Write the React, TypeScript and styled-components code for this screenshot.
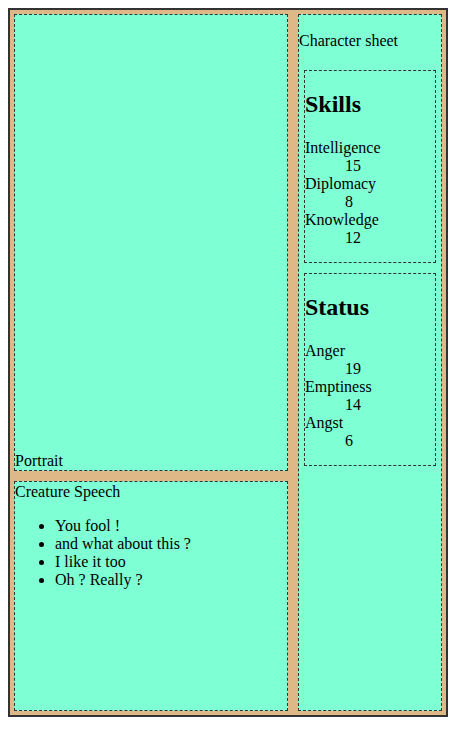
import React from "react";
import styled, { createGlobalStyle } from "styled-components";

const GlobalStyle = createGlobalStyle`
  body {
    margin: 8px;
    font-family: "Liberation Serif", "Times New Roman", serif;
    font-size: 16px;
    color: #000;
    background: #fff;
  }
`;

const Board = styled.div`
  display: grid;
  grid-template-columns: 274px 144px;
  grid-template-rows: 457px 230px;
  gap: 10px;
  width: 428px;
  padding: 4px;
  background-color: burlywood;
  border: 2px solid #333;
`;

const Panel = styled.div<{ $span?: boolean }>`
  box-sizing: border-box;
  display: flex;
  flex-direction: column;
  background-color: aquamarine;
  border: 1px dashed #333;
  grid-row: ${(p) => (p.$span ? "1 / 3" : "auto")};
  grid-column: ${(p) => (p.$span ? "2" : "auto")};
  min-height: 0;
`;

const PortraitPanel = styled(Panel)`
  justify-content: flex-end;
`;

const SpeechPanel = styled(Panel)`
  display: block;
  padding-top: 1px;
`;

const SpeechList = styled.ul`
  margin: 16px 0;
  padding-left: 40px;
`;

const SheetTitle = styled.p`
  margin: 16px 0;
  padding-top: 1px;
  line-height: 17px;
`;

const StatBox = styled.div`
  margin: 5px;
  border: 1px dashed #333;
`;

const StatHeading = styled.h2`
  margin: 0.83em 0;
  font-size: 24px;
  font-weight: bold;
`;

const StatList = styled.dl`
  margin: 16px 0 15px;
  padding-top: 1px;
`;

const StatValue = styled.dd`
  margin-left: 40px;
`;

type Stat = { name: string; value: number };

const skills: Stat[] = [
  { name: "Intelligence", value: 15 },
  { name: "Diplomacy", value: 8 },
  { name: "Knowledge", value: 12 },
];

const status: Stat[] = [
  { name: "Anger", value: 19 },
  { name: "Emptiness", value: 14 },
  { name: "Angst", value: 6 },
];

const speech = ["You fool !", "and what about this ?", "I like it too", "Oh ? Really ?"];

const StatBlock = ({ title, stats }: { title: string; stats: Stat[] }) => (
  <StatBox>
    <StatHeading>{title}</StatHeading>
    <StatList>
      {stats.map((s) => (
        <React.Fragment key={s.name}>
          <dt>{s.name}</dt>
          <StatValue>{s.value}</StatValue>
        </React.Fragment>
      ))}
    </StatList>
  </StatBox>
);

export default function App() {
  return (
    <>
      <GlobalStyle />
      <Board>
        <PortraitPanel>Portrait</PortraitPanel>
        <Panel $span>
          <SheetTitle>Character sheet</SheetTitle>
          <StatBlock title="Skills" stats={skills} />
          <StatBlock title="Status" stats={status} />
        </Panel>
        <SpeechPanel>
          Creature Speech
          <SpeechList>
            {speech.map((line) => (
              <li key={line}>{line}</li>
            ))}
          </SpeechList>
        </SpeechPanel>
      </Board>
    </>
  );
}
